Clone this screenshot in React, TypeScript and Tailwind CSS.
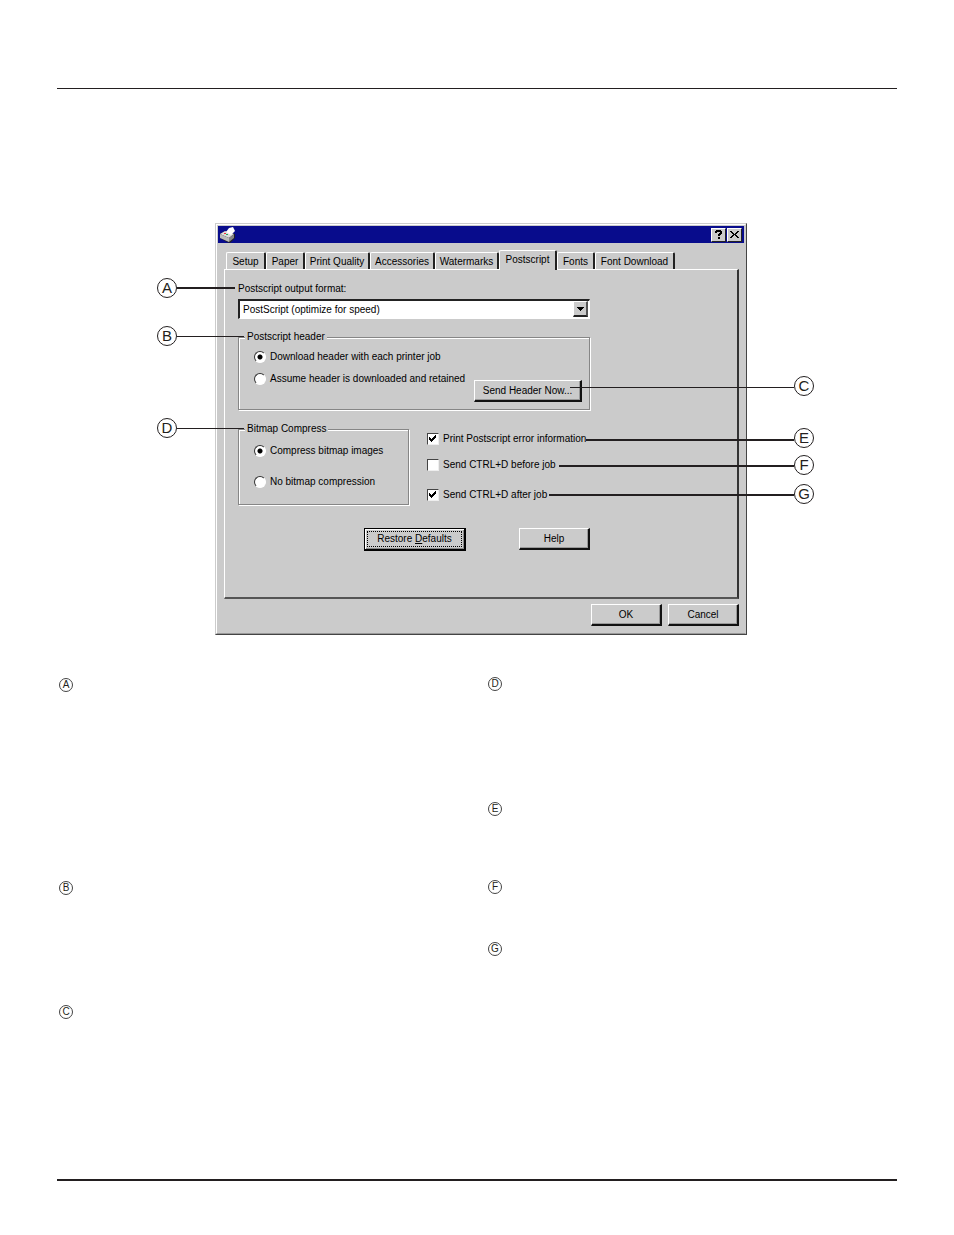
import type { ReactNode } from 'react'

const tabs = [
  { label: 'Setup', width: 'w-[40px]' },
  { label: 'Paper', width: 'w-[39px]' },
  { label: 'Print Quality', width: 'w-[65px]' },
  { label: 'Accessories', width: 'w-[65px]' },
  { label: 'Watermarks', width: 'w-[64px]' },
  { label: 'Postscript', width: 'w-[58px]', active: true },
  { label: 'Fonts', width: 'w-[38px]' },
  { label: 'Font Download', width: 'w-[80px]' },
]

export default function App() {
  return (
    <div className="bg-white px-[57px] pt-[88px] pb-[54px] font-['Liberation_Sans',Arial,sans-serif] text-black">
      <hr className="border-t border-[#231f20]" />

      <figure className="relative mt-[134px] mr-[83px] ml-[100px] pr-[67px] pl-[58px]">
        <PrinterDialog />
        <LeftCallout letter="A" place="top-[55px]" line="w-[58px] h-[2px]" />
        <LeftCallout letter="B" place="top-[103px]" line="w-[67px] h-px" />
        <LeftCallout letter="D" place="top-[195px]" line="w-[67px] h-px" />
        <RightCallout letter="C" place="top-[153px]" line="w-[224px] h-px mt-[2px]" />
        <RightCallout letter="E" place="top-[205px]" line="w-[208px] h-[2px] mt-[4px]" />
        <RightCallout letter="F" place="top-[232px]" line="w-[235px] h-[2px] mt-[2px]" />
        <RightCallout letter="G" place="top-[261px]" line="w-[245px] h-[2px] mt-[2px]" />
      </figure>

      {/* Key to the callouts */}
      <div className="mt-[42px] grid h-[502px] grid-cols-[429px_1fr]">
        <div className="pt-px">
          <KeyItem letter="A" space="h-[203px]" />
          <KeyItem letter="B" space="h-[124px]" />
          <KeyItem letter="C" space="h-[14px]" />
        </div>
        <div>
          <KeyItem letter="D" space="h-[125px]" />
          <KeyItem letter="E" space="h-[78px]" />
          <KeyItem letter="F" space="h-[62px]" />
          <KeyItem letter="G" space="h-[14px]" />
        </div>
      </div>

      <hr className="border-t-2 border-[#231f20]" />
    </div>
  )
}

function PrinterDialog() {
  return (
    <section
      aria-label="Printer properties"
      className="border border-t-[#ccc] border-r-[#444] border-b-[#444] border-l-[#ccc] bg-[#cbcbcb] text-[10px] leading-[14px]"
    >
      <div className="border border-t-white border-r-[#cbcbcb] border-b-[#999] border-l-white p-px">
        {/* Title bar */}
        <div className="flex h-[17px] items-center bg-[#080c8c] px-[2px]">
          <PrinterIcon />
          <div className="ml-auto flex gap-px">
            <TitleButton label="What's this?">
              <path d="M4 1h5v1h1v3H9v1H8v1H6V5h1V4h1V3H5v1H3V2h1zM6 8h2v2H6z" />
            </TitleButton>
            <TitleButton label="Close">
              <path d="M2 2h2v1h1v1h1v1h1V4h1V3h1V2h2v1h-1v1H9v1H8v1h1v1h1v1h1v1H9V8H8V7H7V6H6v1H5v1H4v1H2V8h1V7h1V6h1V5H4V4H3V3H2z" />
            </TitleButton>
          </div>
        </div>

        <div className="pt-[7px] pr-[5px] pb-[6px] pl-[6px]">
          <div role="tablist" className="flex h-[19px] items-end pl-[2px]">
            {tabs.map((tab) => (
              <button
                key={tab.label}
                type="button"
                role="tab"
                aria-selected={!!tab.active}
                className={`${tab.width} ${
                  tab.active ? 'relative -mb-px h-[20px] pb-px' : 'h-[17px] pt-px'
                } shrink-0 rounded-t-[2px] border-t border-r-2 border-l border-t-white border-r-[#222] border-l-white bg-[#cbcbcb] text-center whitespace-nowrap`}
              >
                {tab.label}
              </button>
            ))}
          </div>

          <div
            role="tabpanel"
            className="h-[330px] border-t border-r-2 border-b-2 border-l border-t-white border-r-[#333] border-b-[#555] border-l-white pt-[12px] pl-[13px]"
          >
            <label htmlFor="format" className="block">Postscript output format:</label>
            <div className="relative mt-[3px] w-[352px]">
              <select
                id="format"
                className="block h-[20px] w-full appearance-none border-t-2 border-r border-b border-l-2 border-t-[#222] border-r-white border-b-white border-l-[#222] bg-white pl-[3px]"
              >
                <option>PostScript (optimize for speed)</option>
              </select>
              <span className="pointer-events-none absolute top-[2px] right-[2px] flex h-[16px] w-[15px] items-center justify-center border-t border-r-2 border-b-2 border-l border-t-white border-r-[#555] border-b-[#222] border-l-white bg-[#cbcbcb]">
                <svg width="7" height="4" viewBox="0 0 7 4" shapeRendering="crispEdges" aria-hidden="true">
                  <path d="M0 0h7v1H6v1H5v1H4v1H3V3H2V2H1V1H0z" />
                </svg>
              </span>
            </div>

            <GroupBox title="Postscript header" size="mt-[11px] h-[80px] w-[352px]">
              <div className="flex flex-col gap-[8px] pt-[6px] pl-[15px]">
                <Radio name="header" label="Download header with each printer job" checked />
                <Radio name="header" label="Assume header is downloaded and retained" />
              </div>
              <PushButton className="-mt-[6px] ml-[235px] w-[108px]">Send Header Now...</PushButton>
            </GroupBox>

            <div className="mt-[12px] flex">
              <GroupBox title="Bitmap Compress" size="h-[83px] w-[171px]">
                <div className="flex flex-col gap-[17px] pt-[8px] pl-[15px]">
                  <Radio name="bitmap" label="Compress bitmap images" checked />
                  <Radio name="bitmap" label="No bitmap compression" />
                </div>
              </GroupBox>
              <div className="ml-[18px] flex flex-col pt-[10px]">
                <Checkbox label="Print Postscript error information" checked />
                <Checkbox label="Send CTRL+D before job" className="mt-[12px]" />
                <Checkbox label="Send CTRL+D after job" className="mt-[16px]" checked />
              </div>
            </div>

            <div className="mt-[23px] flex gap-[53px] pl-[126px]">
              <button
                type="button"
                className="h-[23px] w-[102px] border border-r-2 border-b-2 border-black bg-[#cbcbcb] p-[2px] shadow-[inset_1px_1px_0_#fff,inset_-1px_-1px_0_#888]"
              >
                <span className="block border border-dotted border-black">
                  Restore <u>D</u>efaults
                </span>
              </button>
              <PushButton className="w-[71px]">Help</PushButton>
            </div>
          </div>

          <div className="mt-[5px] flex justify-end gap-[6px]">
            <PushButton className="w-[71px]">OK</PushButton>
            <PushButton className="w-[71px]">Cancel</PushButton>
          </div>
        </div>
      </div>
    </section>
  )
}

function GroupBox({ title, size, children }: { title: string; size: string; children: ReactNode }) {
  return (
    <fieldset
      className={`${size} border border-[#868686] shadow-[1px_1px_0_#fff,inset_1px_1px_0_#fff]`}
    >
      <legend className="ml-[6px] bg-[#cbcbcb] px-[2px]">{title}</legend>
      {children}
    </fieldset>
  )
}

function Radio({ name, label, checked }: { name: string; label: string; checked?: boolean }) {
  return (
    <label className="flex items-center gap-[4px] whitespace-nowrap">
      <input
        type="radio"
        name={name}
        defaultChecked={checked}
        className="size-[12px] shrink-0 appearance-none rounded-full border border-t-[#333] border-r-white border-b-white border-l-[#333] bg-white checked:bg-[radial-gradient(circle,#000_2px,#fff_3px)]"
      />
      {label}
    </label>
  )
}

function Checkbox({ label, checked, className = '' }: { label: string; checked?: boolean; className?: string }) {
  return (
    <label className={`${className} flex items-center gap-[4px] whitespace-nowrap`}>
      <span className="grid size-[12px] shrink-0">
        <input
          type="checkbox"
          defaultChecked={checked}
          className="peer col-start-1 row-start-1 size-[12px] appearance-none border border-t-[#444] border-r-[#eee] border-b-[#eee] border-l-[#444] bg-white"
        />
        <svg
          viewBox="0 0 12 12"
          shapeRendering="crispEdges"
          aria-hidden="true"
          className="pointer-events-none invisible col-start-1 row-start-1 size-[12px] peer-checked:visible"
        >
          <path d="M2 4h1v1h1v1h1V5h1V4h1V3h1V2h1v3H8v1H7v1H6v1H5v1H4V8H3V7H2z" />
        </svg>
      </span>
      {label}
    </label>
  )
}

function PushButton({ className, children }: { className: string; children: ReactNode }) {
  return (
    <button
      type="button"
      className={`${className} block h-[22px] border-t border-r-2 border-b-2 border-l border-t-white border-r-[#111] border-b-[#111] border-l-white bg-[#cbcbcb] text-center whitespace-nowrap shadow-[inset_-1px_-1px_0_#999]`}
    >
      {children}
    </button>
  )
}

function TitleButton({ label, children }: { label: string; children: ReactNode }) {
  return (
    <button
      type="button"
      aria-label={label}
      className="h-[14px] w-[15px] border border-t-white border-r-[#222] border-b-[#222] border-l-white bg-[#cbcbcb]"
    >
      <svg width="13" height="12" viewBox="0 0 13 12" shapeRendering="crispEdges" aria-hidden="true">
        {children}
      </svg>
    </button>
  )
}

function PrinterIcon() {
  return (
    <svg width="16" height="16" viewBox="0 0 16 16" aria-hidden="true">
      <path d="M0 7l5-3 10 3v4l-5 5-3-1-7-4z" fill="#222" />
      <path d="M0 7l5-3 9 3-5 4z" fill="#ddd" />
      <path d="M0 7l9 4v4l-9-4z" fill="#bbb" />
      <path d="M9 11l5-4v4l-5 4z" fill="#888" />
      <path d="M6 5l3-4 4-1 2 4-4 4z" fill="#fff" />
      <path d="M4 6h2v1H4z" fill="#e33" />
      <path d="M6 7h2v1H6z" fill="#2a5" />
    </svg>
  )
}

function Badge({ letter }: { letter: string }) {
  return (
    <span className="flex size-[20px] shrink-0 items-center justify-center rounded-full border border-[#231f20] text-[15px] leading-[18px] text-[#231f20]">
      {letter}
    </span>
  )
}

function LeftCallout({ letter, place, line }: { letter: string; place: string; line: string }) {
  return (
    <div className={`${place} absolute left-0 flex items-center`}>
      <Badge letter={letter} />
      <span className={`${line} bg-[#231f20]`} />
    </div>
  )
}

function RightCallout({ letter, place, line }: { letter: string; place: string; line: string }) {
  return (
    <div className={`${place} absolute right-0 flex items-center`}>
      <span className={`${line} bg-[#231f20]`} />
      <Badge letter={letter} />
    </div>
  )
}

function KeyItem({ letter, space }: { letter: string; space: string }) {
  return (
    <div className={`${space} pl-[2px]`}>
      <span className="flex size-[14px] items-center justify-center rounded-full border border-[#444] text-[10px] leading-[12px] text-[#231f20]">
        {letter}
      </span>
    </div>
  )
}
